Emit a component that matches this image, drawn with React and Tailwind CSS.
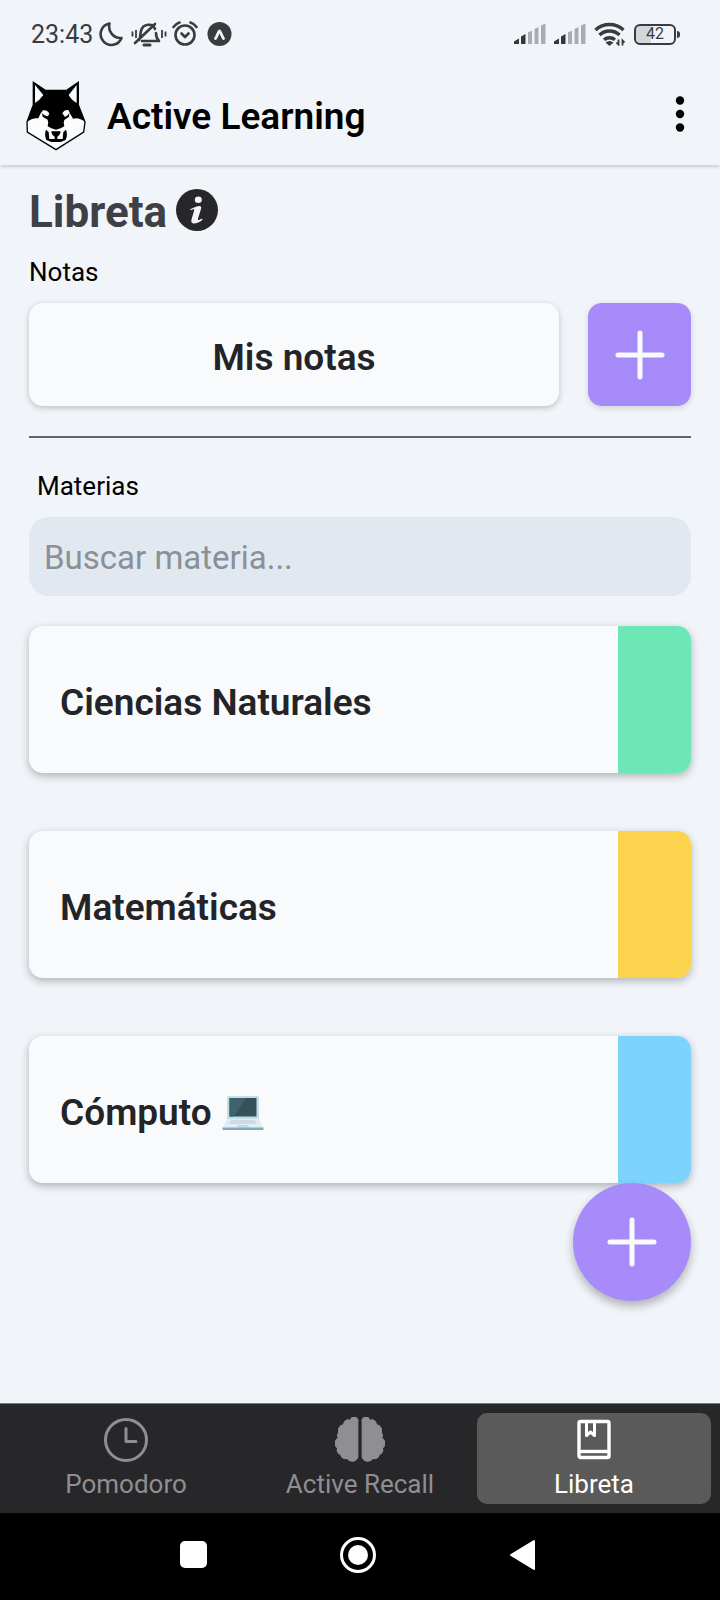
import { useState } from "react";

const subjects = [
  { name: "Ciencias Naturales", color: "bg-[#6ee7b7]" },
  { name: "Matemáticas", color: "bg-[#fcd34d]" },
  { name: "Cómputo", color: "bg-[#7dd3fc]", laptop: true },
];

function SignalIcon() {
  return (
    <svg viewBox="0 0 32 22" className="h-[22px] w-8" aria-hidden="true">
      <path d="M0 18.500l5-3V21H0z" fill="#343639" />
      <path d="M7 13.500l4.500-2.500v10H7z" fill="#343639" />
      <path d="M14 9.500l4-2V21h-4zM20.500 6l4-2v17h-4zM27 2.500l4.500-2V21H27z" fill="#a9acb0" />
    </svg>
  );
}

function StatusBar() {
  return (
    <div className="flex h-[68px] items-center justify-between pr-10 pl-[31px] text-[#3a3b3f]">
      <div className="flex items-center">
        <span className="w-[67px] pt-0.5 text-[25px] leading-8">23:43</span>
        <svg viewBox="0 0 138 26" className="h-[26px] w-[138px]" fill="none" stroke="currentColor" strokeWidth="2.600" strokeLinecap="round" strokeLinejoin="round" aria-hidden="true">
          <path d="M11.500 2.500A10.800 10.800 0 1 0 23.500 17 11.500 11.500 0 0 1 11.500 2.500z" />
          <g transform="translate(-2 0)">
            <path d="M46 20h15M43 19c2-3 1-6 2-9 2-8 12-8 14-2M60 12c0 3 1 6 3 8h-4M39 22L59 3" />
            <path d="M48 24h6" strokeWidth="3" />
            <path d="M40 9v8M36.500 10.500v5M66 9v8M69.500 10.500v5" strokeWidth="1.800" strokeLinecap="butt" />
          </g>
          <circle cx="87" cy="14" r="9.500" />
          <path d="M83.500 12.500l3.500 3.500 3.500-3.500" />
          <path d="M75.500 6c2-2.500 4-4 6-4.500M98.500 6c-2-2.500-4-4-6-4.500" />
          <circle cx="121.500" cy="13" r="12" fill="currentColor" stroke="none" />
          <path d="M117.500 17.500c2-3 3-7.500 4-7.500s2 4.500 4 7.500" stroke="#f1f4f9" strokeWidth="2.800" />
        </svg>
      </div>
      <div className="flex items-center">
        <div className="flex items-center gap-2">
          <SignalIcon />
          <SignalIcon />
          <svg viewBox="0 0 32 24" className="h-6 w-8" fill="none" stroke="currentColor" strokeWidth="3.400" aria-hidden="true">
            <path d="M1.500 8a20.500 20.500 0 0 1 28 0M5.500 13a14.500 14.500 0 0 1 20 0M10 17.800a8.500 8.500 0 0 1 11 0" />
            <path d="M11.500 20.500q4-3 8 0l-4 3.500z" fill="currentColor" stroke="none" />
            <path d="M24.500 17.500v5l-2-2M28.500 23.500v-5l2 2" strokeWidth="1.800" />
          </svg>
        </div>
        <div className="ml-2 flex h-[21px] w-[42px] items-center justify-center rounded-md border-2 border-[#3a3b3f] bg-linear-to-r from-[#d4d6da] from-40% to-transparent to-40% text-[16px] leading-4">
          42
        </div>
        <div className="ml-px h-[7px] w-[3px] rounded-r-sm bg-[#3a3b3f]" />
      </div>
    </div>
  );
}

function WolfLogo() {
  return (
    <svg viewBox="33 27 180 213" className="h-[71px] w-[60px]" role="img" aria-label="Active Learning">
      <path d="M55 34L91 58H155L190 34V102L198 122L210 153L206 183L123 236L37 183L36 153L50 115L55 102Z" fill="#fbfcfe" stroke="#000" strokeWidth="4" />
      <path d="M55 34L91 58H155L190 34V102L198 122L210 153Q192 138 174 143L166 129L160 117Q148 115 142 127L150 138L158 133L163 126L162 137L148 147Q144 156 148 166L137 172L123 176L109 172L98 166Q101 154 98 146L83 137L81 126L88 133L98 136L103 129Q98 116 84 118L77 127L70 142Q52 139 36 153L50 115L55 102ZM60 42V96Q74 88 85 72ZM185 42V96Q171 89 161 72Z" fill="#000" fillRule="evenodd" />
      <path d="M93 176Q87 191 94 207L109 213H137L152 207Q159 191 153 176L145 183L143 204H103L101 183Z" fill="#000" />
      <path d="M109 184Q108 180 113 181H133Q138 180 137 184Q134 193 127 197V206H119V197Q111 193 109 184Z" fill="#000" />
    </svg>
  );
}

function PlusIcon() {
  return (
    <svg viewBox="0 0 50 50" className="size-[50px]" stroke="#f8fafc" strokeWidth="5" strokeLinecap="round" aria-hidden="true">
      <path d="M25 3v44M3 25h44" />
    </svg>
  );
}

function InfoIcon() {
  return (
    <svg viewBox="0 0 42 42" className="size-[42px]" aria-hidden="true">
      <circle cx="21" cy="21" r="21" fill="#27272a" />
      <ellipse cx="22.300" cy="10.800" rx="3.500" ry="3.200" fill="#f1f4f9" />
      <path d="M14 20.500q6-3.500 9.500-3.500 2.200 0 1.500 3l-3 9.500q-.5 2 1 1.500l3-1.500.5 1.200q-4.500 3.800-8.500 3.800-3.500 0-2.500-4l2.600-9q.4-1.700-.8-1.300l-2.500 1z" fill="#f1f4f9" />
    </svg>
  );
}

function LaptopIcon() {
  return (
    <svg viewBox="0 0 42 36" className="h-9 w-[42px]" role="img" aria-label="💻">
      <rect x="5" y="1" width="32" height="24" rx="1.500" fill="#c3dfe8" />
      <rect x="7.500" y="3" width="27" height="18.500" fill="#36515b" />
      <path d="M7.500 3h16L12 21.500H7.500z" fill="#3f636c" />
      <path d="M5 24h32l4.500 9H.5z" fill="#e3edf5" />
      <path d="M9 25h24l2 4H7z" fill="#cbdae5" />
      <path d="M16 30h10l1 2.500H15z" fill="#b6ddec" />
      <path d="M.5 32.500h41V35H.5z" fill="#83aab5" />
    </svg>
  );
}

function ClockIcon() {
  return (
    <svg viewBox="0 0 46 46" className="size-[46px] shrink-0" fill="none" stroke="currentColor" strokeWidth="3" strokeLinecap="round" strokeLinejoin="round" aria-hidden="true">
      <circle cx="23" cy="23" r="20.500" />
      <path d="M23 11.500v13h10" />
    </svg>
  );
}

function BrainIcon() {
  const half =
    "M70 14A13 13 0 0 0 45 6A16 16 0 0 0 24 20A18 18 0 0 0 10 44A14 14 0 0 0 8 60A20 20 0 0 0 6 92A16 16 0 0 0 16 112A16 16 0 0 0 36 124A19 19 0 0 0 70 118Z";
  return (
    <svg viewBox="0 -2 150 138" className="h-[46px] w-[50px] shrink-0" fill="currentColor" aria-hidden="true">
      <path d={half} />
      <path d={half} transform="translate(150 0) scale(-1 1)" />
    </svg>
  );
}

function NotebookIcon() {
  return (
    <svg viewBox="0 0 34 46" className="h-[46px] w-[34px] shrink-0" fill="none" stroke="currentColor" strokeWidth="3.400" strokeLinejoin="round" aria-hidden="true">
      <rect x="2" y="4.500" width="30" height="36" rx="1.500" />
      <path d="M2 34.500h30" />
      <path d="M9.500 5v13.500l4-3.500 4 3.500V5" strokeWidth="3" />
    </svg>
  );
}

const tabs = [
  { name: "Pomodoro", Icon: ClockIcon },
  { name: "Active Recall", Icon: BrainIcon },
  { name: "Libreta", Icon: NotebookIcon },
];

export default function App() {
  const [active, setActive] = useState("Libreta");

  return (
    <div className="flex min-h-screen flex-col bg-[#f1f4f9] font-['Roboto',sans-serif] text-black">
      <StatusBar />
      <header className="flex h-[97px] items-center justify-between pr-5 pb-0.5 pl-[26px] shadow-[0_3px_3px_-1px_rgba(0,0,0,0.16)]">
        <div className="flex items-center gap-[21px]">
          <WolfLogo />
          <h1 className="pt-0.5 text-[37px] leading-[42px] font-semibold">Active Learning</h1>
        </div>
        <button type="button" aria-label="Menú" className="flex h-12 w-10 items-center justify-center pb-1">
          <svg viewBox="0 0 10 36" className="h-9 w-2.5" aria-hidden="true">
            <circle cx="5" cy="4.500" r="4.200" />
            <circle cx="5" cy="18" r="4.200" />
            <circle cx="5" cy="31.500" r="4.200" />
          </svg>
        </button>
      </header>

      <main className="relative flex flex-1 flex-col px-[29px] pt-[18px]">
        <div className="flex items-center gap-[9px]">
          <h2 className="pt-1 text-[44px] leading-[50px] font-bold text-[#3f4045]">Libreta</h2>
          <button type="button" aria-label="Información">
            <InfoIcon />
          </button>
        </div>
        <h3 className="mt-[19px] text-[26px] leading-8">Notas</h3>
        <div className="mt-[15px] flex gap-[29px]">
          <button type="button" className="h-[103px] flex-1 rounded-[14px] bg-[#f9fafc] pt-1.5 text-[37px] font-semibold text-[#232427] shadow-[0_2px_6px_rgba(0,0,0,0.22)]">
            Mis notas
          </button>
          <button type="button" aria-label="Añadir nota" className="flex size-[103px] items-center justify-center rounded-[14px] bg-[#a78bfa] shadow-[0_2px_6px_rgba(0,0,0,0.14)]">
            <PlusIcon />
          </button>
        </div>
        <hr className="mt-[30px] border-t-2 border-[#62646a]" />
        <label htmlFor="search" className="mt-8 pl-2 text-[26px] leading-8">
          Materias
        </label>
        <input
          id="search"
          type="search"
          placeholder="Buscar materia..."
          className="mt-[15px] h-[79px] w-full rounded-[20px] bg-[#e2e8f0] px-[15px] pt-0.5 text-[33px] placeholder:text-[#8a9097]"
        />
        <div className="mt-[30px] flex flex-col gap-[58px]">
          {subjects.map((subject) => (
            <button
              key={subject.name}
              type="button"
              className="flex h-[147px] overflow-hidden rounded-[14px] bg-[#f9fafc] text-left text-[37px] font-semibold text-[#232427] shadow-[0_3px_8px_rgba(0,0,0,0.28)]"
            >
              <span className="flex h-full flex-1 items-center gap-2.5 pt-1.5 pl-[31px]">
                {subject.name}
                {subject.laptop && <LaptopIcon />}
              </span>
              <span className={`h-full w-[73px] ${subject.color}`} />
            </button>
          ))}
        </div>
        <button
          type="button"
          aria-label="Añadir materia"
          className="absolute right-[29px] bottom-[102px] flex size-[118px] items-center justify-center rounded-full bg-[#a78bfa] shadow-[0_5px_10px_rgba(0,0,0,0.28)]"
        >
          <PlusIcon />
        </button>
      </main>

      <nav className="flex h-[110px] border-t border-[#77797c] bg-[#27272a] px-[9px] py-[9px]">
        {tabs.map(({ name, Icon }) => (
          <button
            key={name}
            type="button"
            onClick={() => setActive(name)}
            className={`flex h-full flex-1 basis-0 flex-col items-center rounded-[10px] pt-1 text-[26px] leading-[43px] ${
              name === active ? "bg-[#5a5a5a] text-white" : "text-[#8f8f91]"
            }`}
          >
            <Icon />
            {name}
          </button>
        ))}
      </nav>

      <div className="flex h-[87px] items-center justify-center gap-[132px] bg-black pr-1.5 pb-1">
        <button type="button" aria-label="Recientes">
          <svg viewBox="0 0 28 28" className="size-7" aria-hidden="true">
            <rect x="1" y="0" width="27" height="27" rx="5" fill="white" />
          </svg>
        </button>
        <button type="button" aria-label="Inicio">
          <svg viewBox="0 0 38 38" className="size-[38px]" aria-hidden="true">
            <circle cx="19" cy="19" r="16.500" fill="none" stroke="white" strokeWidth="3" />
            <circle cx="19" cy="19" r="10" fill="white" />
          </svg>
        </button>
        <button type="button" aria-label="Atrás">
          <svg viewBox="0 0 27 32" className="h-8 w-[27px]" aria-hidden="true">
            <path d="M2 16L25 2v28z" fill="white" stroke="white" strokeWidth="2" strokeLinejoin="round" />
          </svg>
        </button>
      </div>
    </div>
  );
}
